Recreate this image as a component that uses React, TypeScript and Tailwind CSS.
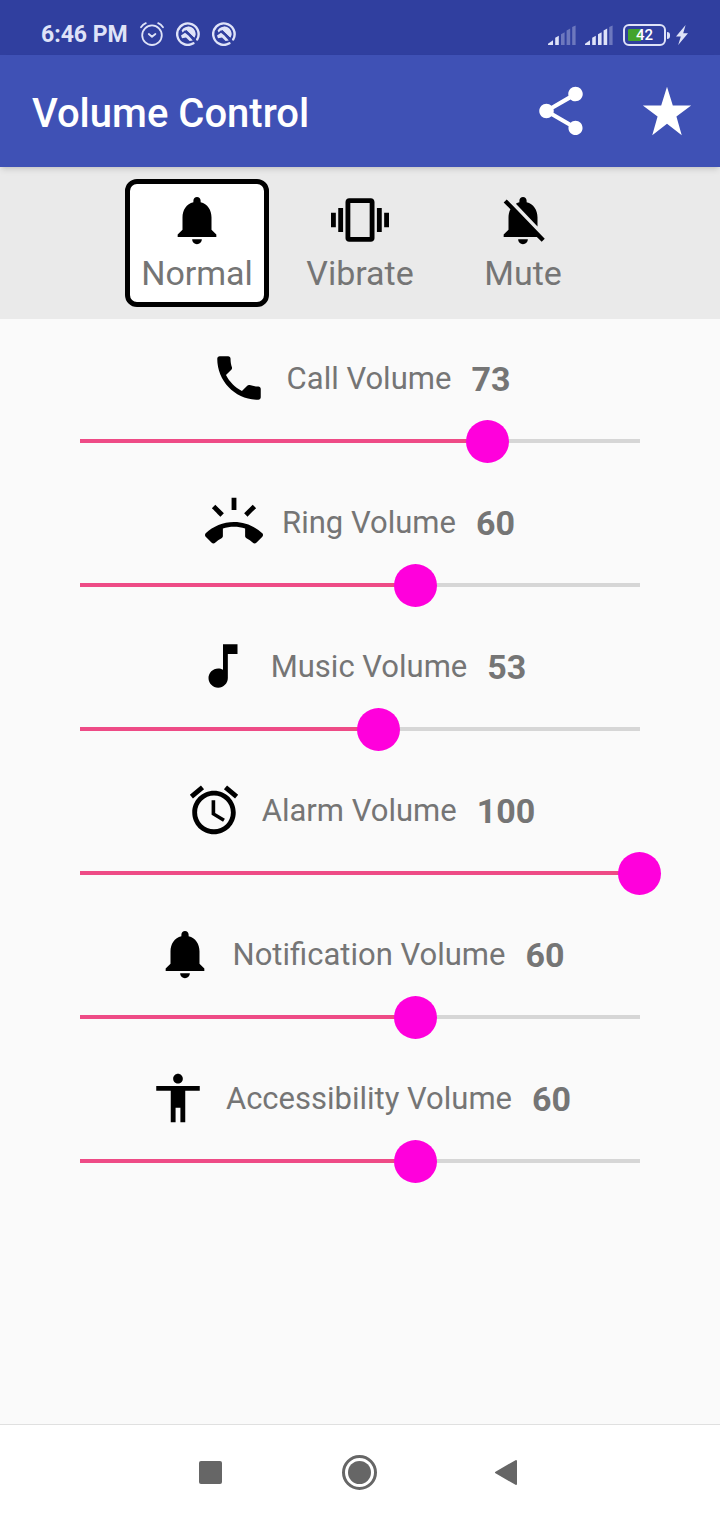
import { useState } from 'react'

interface Channel {
  id: string
  label: string
  level: number
  max: number
  icon: string
}

const ICONS = {
  bell: 'M12 22c1.1 0 2-.9 2-2h-4c0 1.1.89 2 2 2zm6-6v-5c0-3.07-1.64-5.64-4.5-6.32V4c0-.83-.67-1.5-1.5-1.5s-1.5.67-1.5 1.5v.68C7.63 5.36 6 7.92 6 11v5l-2 2v1h16v-1l-2-2z',
  vibrate: 'M0 15h2V9H0v6zm3 2h2V7H3v10zm19-8v6h2V9h-2zm-3 8h2V7h-2v10zM16.5 3h-9C6.67 3 6 3.67 6 4.5v15c0 .83.67 1.5 1.5 1.5h9c.83 0 1.5-.67 1.5-1.5v-15c0-.83-.67-1.5-1.5-1.5zM16 19H8V5h8v14z',
  mute: 'M20 18.69L7.84 6.14 5.27 3.49 4 4.76l2.8 2.8v.01c-.52.99-.8 2.16-.8 3.42v5l-2 2v1h13.73l2 2L21 19.72l-1-1.03zM12 22c1.11 0 2-.89 2-2h-4c0 1.11.89 2 2 2zm6-7.32V11c0-3.08-1.64-5.64-4.5-6.32V4c0-.83-.67-1.5-1.5-1.5s-1.5.67-1.5 1.5v.68c-.15.03-.29.08-.42.12-.1.03-.2.07-.3.11h-.01c-.01 0-.01 0-.02.01-.23.09-.46.2-.68.31 0 0-.01 0-.01.01L18 14.68z',
  call: 'M6.62 10.79c1.44 2.83 3.76 5.14 6.59 6.59l2.2-2.2c.27-.27.67-.36 1.02-.24 1.12.37 2.33.57 3.57.57.55 0 1 .45 1 1V20c0 .55-.45 1-1 1-9.39 0-17-7.61-17-17 0-.55.45-1 1-1h3.5c.55 0 1 .45 1 1 0 1.25.2 2.45.57 3.57.11.35.03.74-.25 1.02l-2.2 2.2z',
  ring: 'M23.71 16.67C20.66 13.78 16.54 12 12 12 7.46 12 3.34 13.78.29 16.67c-.18.18-.29.43-.29.71 0 .28.11.53.29.71l2.48 2.48c.18.18.43.29.71.29.27 0 .52-.11.7-.28.79-.74 1.69-1.36 2.66-1.85.33-.16.56-.5.56-.9v-3.1c1.45-.48 3-.73 4.6-.73 1.6 0 3.15.25 4.6.72v3.1c0 .39.23.74.56.9.98.49 1.87 1.12 2.67 1.85.18.18.43.28.7.28.28 0 .53-.11.71-.29l2.48-2.48c.18-.18.29-.43.29-.71 0-.28-.12-.52-.3-.7zM21.16 6.26l-1.41-1.41-3.56 3.55 1.41 1.41s3.45-3.52 3.56-3.55zM13 2h-2v5h2V2zM6.4 9.81L7.81 8.4 4.26 4.84 2.84 6.26c.11.03 3.56 3.55 3.56 3.55z',
  music: 'M12 3v10.55c-.59-.34-1.27-.55-2-.55-2.21 0-4 1.79-4 4s1.79 4 4 4 4-1.79 4-4V7h4V3h-6z',
  alarm: 'M22 5.72l-4.6-3.86-1.29 1.53 4.6 3.86L22 5.72zM7.88 3.39L6.6 1.86 2 5.71l1.29 1.53 4.59-3.85zM12.5 8H11v6l4.75 2.85.75-1.23-4-2.37V8zM12 4c-4.97 0-9 4.03-9 9s4.02 9 9 9c4.97 0 9-4.03 9-9s-4.03-9-9-9zm0 16c-3.87 0-7-3.13-7-7s3.13-7 7-7 7 3.13 7 7-3.13 7-7 7z',
  accessibility: 'M12 2c1.1 0 2 .9 2 2s-.9 2-2 2-2-.9-2-2 .9-2 2-2zm9 7h-6v13h-2v-6h-2v6H9V9H3V7h18v2z',
  share: 'M18 16.08c-.76 0-1.44.3-1.96.77L8.91 12.7c.05-.23.09-.46.09-.7s-.04-.47-.09-.7l7.05-4.11c.54.5 1.25.81 2.04.81 1.66 0 3-1.34 3-3s-1.34-3-3-3-3 1.34-3 3c0 .24.04.47.09.7L8.04 9.81C7.5 9.31 6.79 9 6 9c-1.66 0-3 1.34-3 3s1.34 3 3 3c.79 0 1.5-.31 2.04-.81l7.12 4.16c-.05.21-.08.43-.08.65 0 1.61 1.31 2.92 2.92 2.92s2.92-1.31 2.92-2.92-1.31-2.92-2.92-2.92z',
  star: 'M12 2l2.4 7.7H22l-6.1 4.6L18.1 22 12 17.3 5.9 22l2.2-7.7L2 9.7h7.6z',
}

const MODES = [
  { id: 'normal', label: 'Normal', icon: ICONS.bell },
  { id: 'vibrate', label: 'Vibrate', icon: ICONS.vibrate },
  { id: 'mute', label: 'Mute', icon: ICONS.mute },
]

const CHANNELS: Channel[] = [
  { id: 'call', label: 'Call Volume', level: 8, max: 11, icon: ICONS.call },
  { id: 'ring', label: 'Ring Volume', level: 9, max: 15, icon: ICONS.ring },
  { id: 'music', label: 'Music Volume', level: 8, max: 15, icon: ICONS.music },
  { id: 'alarm', label: 'Alarm Volume', level: 15, max: 15, icon: ICONS.alarm },
  { id: 'notification', label: 'Notification Volume', level: 9, max: 15, icon: ICONS.bell },
  { id: 'accessibility', label: 'Accessibility Volume', level: 9, max: 15, icon: ICONS.accessibility },
]

function Icon({ path }: { path: string }) {
  return (
    <svg viewBox="0 0 24 24" className="h-[58px] w-[58px] shrink-0 fill-current" aria-hidden="true">
      <path d={path} />
    </svg>
  )
}

function AlarmStatus() {
  return (
    <svg viewBox="0 0 24 24" className="h-6 w-6" fill="none" stroke="currentColor" strokeWidth="1.8" strokeLinecap="round" strokeLinejoin="round">
      <circle cx="12" cy="13.2" r="9.8" />
      <path d="M1 5.2C2.2 3.4 3.8 2 5.8 1.2M23 5.2C21.8 3.4 20.2 2 18.2 1.2M8.8 12l3.2 2.8 3.4-2.8" />
    </svg>
  )
}

function AppStatus() {
  return (
    <svg viewBox="0 0 24 24" className="h-6 w-6" fill="none">
      <path d="M17.4 21.3A10.7 10.7 0 1 1 21.2 17.4" stroke="currentColor" strokeWidth="2.4" strokeLinecap="round" />
      <path d="M5.6 8.6A7.2 7.2 0 0 1 18.4 15.6L10.6 8 8.6 8.4 6.6 10.4z" fill="currentColor" />
      <path d="M18.4 15.6L10.6 8l-2 .4A7 7 0 0 1 12 4.6a7.2 7.2 0 0 1 6.4 11z" fill="currentColor" />
      <path d="M5 13.4l4-2.6 3.4 2.6 4.4 5-3.2.6-3.6-3.4-4 .6z" fill="currentColor" />
    </svg>
  )
}

function Signal({ bars }: { bars: number }) {
  return (
    <svg viewBox="0 0 28 20" className="h-5 w-7 fill-current">
      <path d="M0 20v-1.2l5-3.6V20z" />
      <path d="M7.2 20v-7.2l3.6-2V20z" opacity={bars > 1 ? 1 : 0.35} />
      <path d="M13 20V9.2l3.6-2V20z" opacity={bars > 2 ? 1 : 0.35} />
      <path d="M18.6 20V5.4l3.6-2V20z" opacity={bars > 3 ? 1 : 0.35} />
      <path d="M24.2 20V2l3.4-1.6V20z" opacity={bars > 4 ? 1 : 0.35} />
    </svg>
  )
}

function StatusBar() {
  return (
    <div className="flex h-[55px] items-end justify-between bg-[#303f9f] pr-8 pb-2 pl-[41px] text-[#dfe3f8]">
      <div className="flex items-center gap-3">
        <span className="pt-px text-[23px] leading-6 font-bold">6:46 PM</span>
        <div className="flex gap-3 pb-px">
          <AlarmStatus />
          <AppStatus />
          <AppStatus />
        </div>
      </div>
      <div className="flex items-center gap-[9px] pb-px">
        <Signal bars={2} />
        <Signal bars={4} />
        <div className="flex items-center pl-px">
          <div className="flex h-[22px] w-[43px] items-center justify-center rounded-md border-2 border-[#dfe3f8] bg-linear-to-r from-[#43a32c] from-42% to-transparent to-42% bg-clip-content p-[3px] text-[15px] leading-4 font-medium text-white">
            42
          </div>
          <div className="ml-px h-[7px] w-[3px] rounded-r-sm bg-current" />
          <svg viewBox="0 0 12 20" className="ml-[6px] h-5 w-3 fill-current">
            <path d="M9.6 0L0 11.4h4.8L2.2 20 12 8.2H7.2z" />
          </svg>
        </div>
      </div>
    </div>
  )
}

function VolumeRow({ channel }: { channel: Channel }) {
  const [level, setLevel] = useState(channel.level)
  const percent = (level / channel.max) * 100

  return (
    <section className="flex flex-col gap-[13px]">
      <div className="flex items-center justify-center gap-[19px]">
        <Icon path={channel.icon} />
        <div className="flex items-center gap-5 pt-[2px] text-[#757575]">
          <label htmlFor={channel.id} className="text-[31px] leading-10">{channel.label}</label>
          <output htmlFor={channel.id} className="text-[34px] leading-10 font-bold">{Math.round(percent)}</output>
        </div>
      </div>
      <div className="grid items-center">
        <div className="col-start-1 row-start-1 mx-20 mb-px h-1 bg-[#d6d6d6]">
          <div className="h-1 bg-[#ee4b86]" style={{ width: `${percent}%` }} />
        </div>
        <input
          id={channel.id}
          type="range"
          min={0}
          max={channel.max}
          value={level}
          onChange={e => setLevel(Number(e.target.value))}
          className="col-start-1 row-start-1 mx-[59px] h-[43px] appearance-none bg-transparent [&::-webkit-slider-thumb]:h-[43px] [&::-webkit-slider-thumb]:w-[43px] [&::-webkit-slider-thumb]:appearance-none [&::-webkit-slider-thumb]:rounded-full [&::-webkit-slider-thumb]:bg-[#ff00dc]"
        />
      </div>
    </section>
  )
}

export default function App() {
  const [mode, setMode] = useState('normal')

  return (
    <div className="flex min-h-screen flex-col bg-[#fafafa] font-[Roboto,sans-serif]">
      <StatusBar />
      <header className="z-10 flex h-28 items-center justify-between bg-[#3f51b5] pr-6 pl-8 text-white shadow-md">
        <h1 className="pt-[6px] text-[40px] leading-12 font-medium">Volume Control</h1>
        <div className="flex items-center gap-12">
          <button type="button" aria-label="Share"><Icon path={ICONS.share} /></button>
          <button type="button" aria-label="Rate"><Icon path={ICONS.star} /></button>
        </div>
      </header>

      <div className="flex justify-center gap-[19px] bg-[#eaeaea] py-3">
        {MODES.map(item => (
          <button
            key={item.id}
            type="button"
            aria-pressed={mode === item.id}
            onClick={() => setMode(item.id)}
            className={`flex h-32 w-36 flex-col items-center rounded-xl border-[5px] pt-[7px] ${mode === item.id ? 'border-black bg-white' : 'border-transparent'}`}
          >
            <Icon path={item.icon} />
            <span className="text-[34px] leading-12 text-[#757575]">{item.label}</span>
          </button>
        ))}
      </div>

      <main className="flex flex-1 flex-col gap-[30px] py-[30px]">
        {CHANNELS.map(channel => <VolumeRow key={channel.id} channel={channel} />)}
      </main>

      <nav className="flex h-24 items-center justify-center border-t border-[#e0e0e0] bg-white pr-[2px] text-[#666666]">
        <button type="button" aria-label="Recent apps" className="flex w-[149px] justify-center">
          <span className="h-[23px] w-[23px] rounded-xs bg-current" />
        </button>
        <button type="button" aria-label="Home" className="flex w-[149px] justify-center">
          <span className="flex h-[35px] w-[35px] items-center justify-center rounded-full border-3 border-current">
            <span className="h-[23px] w-[23px] rounded-full bg-current" />
          </span>
        </button>
        <button type="button" aria-label="Back" className="flex w-[149px] justify-center">
          <svg viewBox="0 0 28 28" className="h-7 w-7 fill-current stroke-current" strokeWidth="2" strokeLinejoin="round">
            <path d="M22 2v23L2 13.5z" />
          </svg>
        </button>
      </nav>
    </div>
  )
}
